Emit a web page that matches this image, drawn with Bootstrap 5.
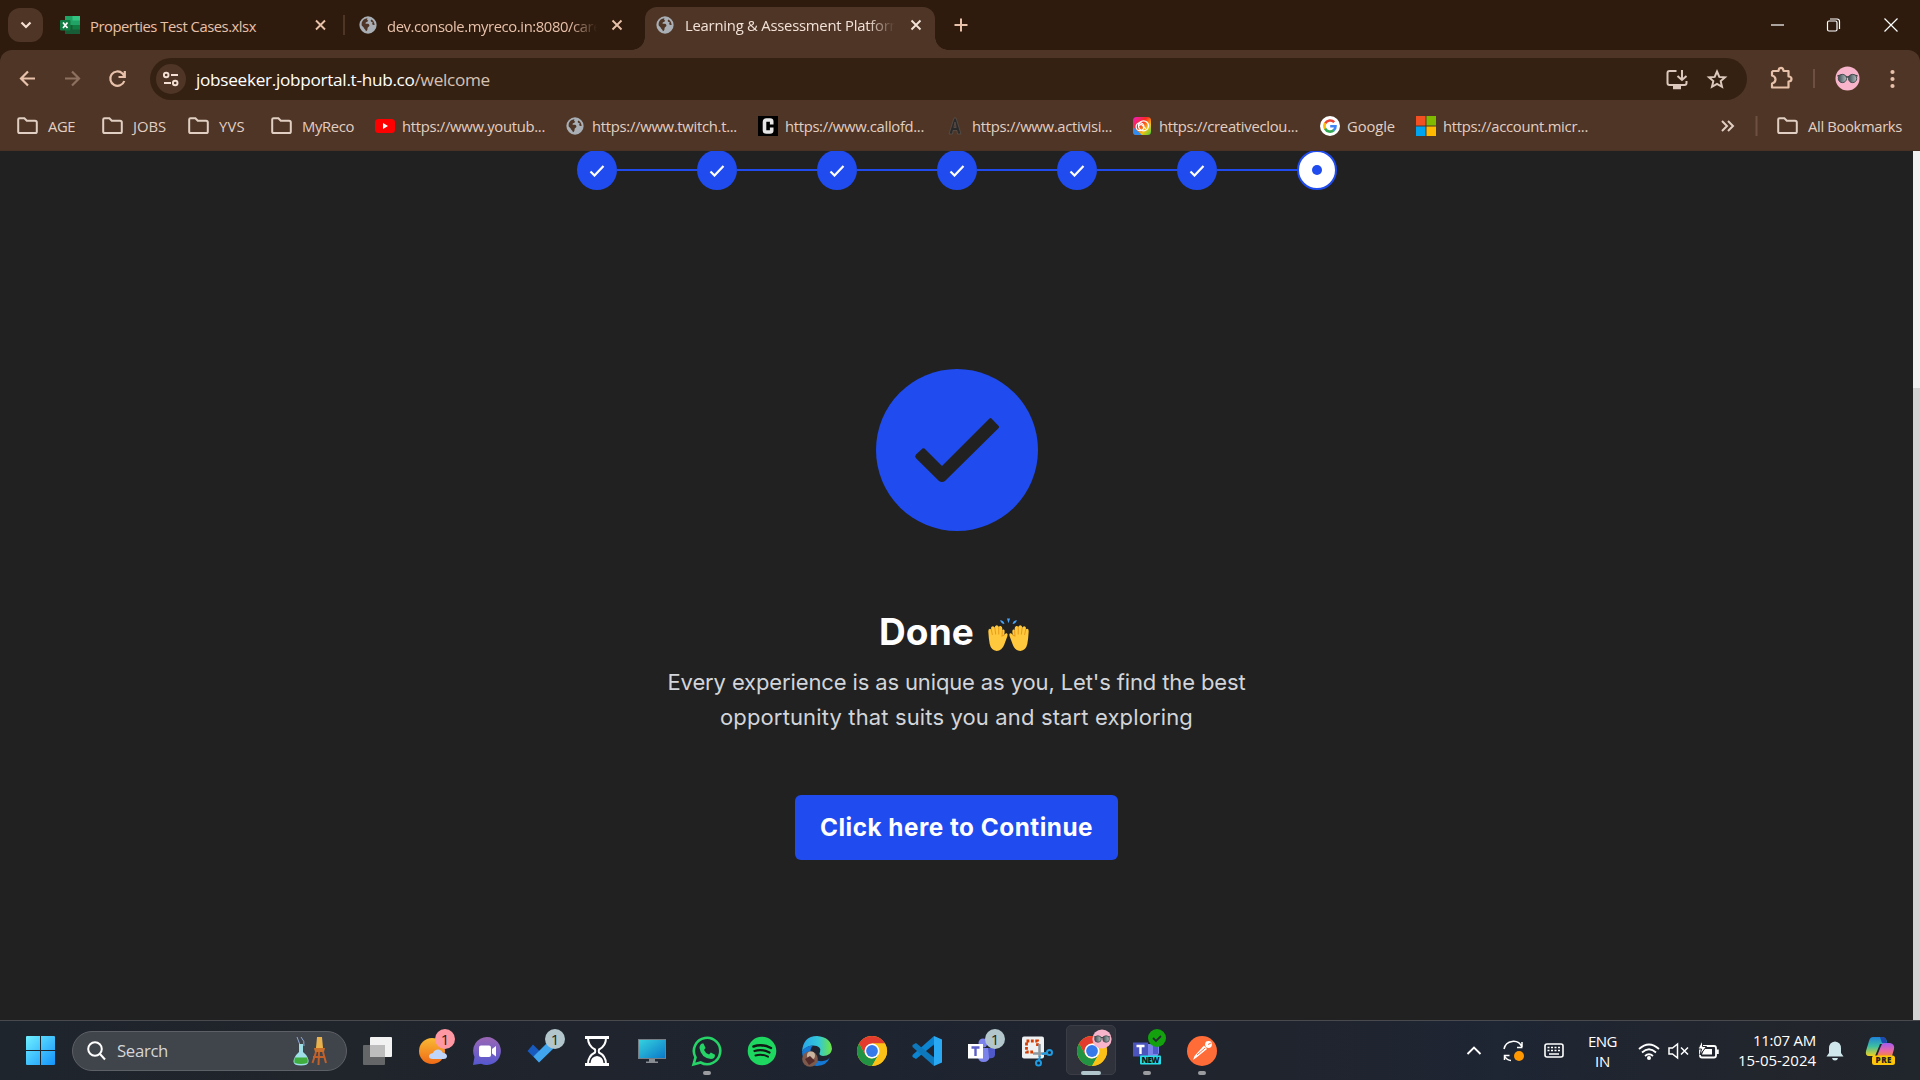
<!DOCTYPE html>
<html lang="en" data-bs-theme="dark">
<head>
<meta charset="utf-8">
<title>Learning &amp; Assessment Platform</title>
<link href="https://cdn.jsdelivr.net/npm/bootstrap@5.3.0/dist/css/bootstrap.min.css" rel="stylesheet">
<style>
:root{--strip:#2e1b0d;--bar:#4e3526;--omni:#352112;--peach:#e8c1aa;--brand:#1f4bef}
html,body{height:100%;overflow:hidden}
body{font-family:"Open Sans","Noto Sans",sans-serif;background:#212121;font-size:14.8px;line-height:20px}
svg{display:block;flex:none}
[data-w]{white-space:nowrap;flex:none}
.strip{height:50px;background:var(--strip);color:var(--peach)}
.strip [data-w],.marks [data-w]{padding-top:1px;display:inline-block}
.drop-btn{width:35px;height:34px;border-radius:12px;background:var(--bar);margin-left:8px}
.tab-a{width:300px;padding-left:17px;gap:10px}
.tab-b{width:300px;padding-left:14px;gap:10px}
.tab-sep{width:2px;height:20px;background:var(--bar)}
.tab-on{width:290px;height:43px;margin-top:7px;padding:0 0 8px 11px;gap:11px;background:var(--bar);border-radius:12px 12px 0 0;color:#f3e2d8;position:relative}
.tab-on::before,.tab-on::after{content:"";position:absolute;bottom:0;width:13px;height:13px}
.tab-on::before{left:-13px;background:radial-gradient(circle at 0 0,transparent 12.5px,var(--bar) 13px)}
.tab-on::after{right:-13px;background:radial-gradient(circle at 100% 0,transparent 12.5px,var(--bar) 13px)}
.tab-text{width:210px;overflow:hidden;white-space:nowrap;-webkit-mask-image:linear-gradient(90deg,#000 87%,transparent)}
.plus{margin-left:19px}
.tool-wrap{background:var(--strip)}
.tools{height:50px;background:var(--bar);border-radius:12px 12px 0 0}
.omni{width:1597px;height:42px;border-radius:21px;background:var(--omni);margin-top:8px;padding:0 19px 0 6px}
.site-chip{width:30px;height:30px;background:var(--bar)}
.url{font-size:17.2px;color:#fff;padding:1px 0 0 2px}
.url span{color:#d5c2b5}
.marks{height:51px;background:var(--bar);color:#e2cfc3;padding:1px 0 0 17px;border-bottom:1px solid #4a3326}
.marks-grid{display:grid;grid-template-columns:85px 86px 83px 104px 190px 193px 187px 187px 188px 96px 305px;align-items:center}
.marks-grid>div{display:flex;align-items:center;gap:7px}
.marks-grid>.dir,.all-dir{gap:10px}
.page{height:869px}
.steps{height:40px;margin-top:-1px}
.dot-step{width:40px;height:40px;border-radius:50%;background:var(--brand)}
.dot-now{background:#fff;border:2px solid var(--brand)}
.dot-now i{width:10px;height:10px;border-radius:50%;background:var(--brand)}
.step-line{width:80px;height:2px;background:var(--brand)}
.copy,.headline,.go{font-family:Inter,"Open Sans",sans-serif}
.hero{margin-top:179px}
.headline{font-size:37px;font-weight:700;line-height:48px;color:#fff;margin:77px 0 0;padding-right:5px;gap:14px}
.copy{font-size:22px;line-height:35px;color:#d2d5da;margin:9px 0 0}
.go{width:323px;height:65px;background:var(--brand);border-radius:6px;color:#fff;font-weight:700;font-size:24.3px;margin-top:60px;padding:0;border:0}
.scroll-rail{width:7px;background:#d4d4d4}
.scroll-rail i{display:block;height:237px;background:#f1f1f1}
.taskbar{height:60px;background:linear-gradient(90deg,#1f252d,#20242b 18%,#1e2430 45%,#20242d 66%,#1e2533 78%,#22252b 94%,#20262c);border-top:1px solid #484a4e;color:#fff}
.start{width:72px;padding-left:26px}
.find{width:275px;height:40px;border-radius:20px;background:#40444b;border:1px solid #5d6066;font-size:16.8px;color:#d4d6d8;padding-left:14px}
.apps{margin-left:2px}
.cell{width:55px;height:59px;position:relative}
.cell svg.ic{width:32px;height:32px}
.num{position:absolute;left:31px;top:8px;width:20px;height:20px;border-radius:50%;background:#b3c6cb;color:#222;font-size:15px;line-height:20px;text-align:center}
.num.pk{background:#ff98a3}
.on-tile::before{content:"";position:absolute;left:2px;top:4px;width:50px;height:50px;border-radius:5px;background:#2f323a;border:1px solid #3a3d45}
.on-tile svg{position:relative}
.run::after{content:"";position:absolute;bottom:5px;left:24px;width:8px;height:4px;border-radius:2px;background:#9a9ca0}
.run.wide::after{left:17px;width:20px;background:#b0c6cc}
.over{position:absolute!important}
.face{left:28px;top:8px}
.fresh{left:12px;top:7px}
.stamp{font-size:15px;line-height:20px}
.lang{margin:0 18px 0 16px}
.clock{margin-left:17px;padding-bottom:2px}
.tray{padding-right:25px}
</style>
<script src="https://cdn.jsdelivr.net/npm/bootstrap@5.3.0/dist/js/bootstrap.bundle.min.js"></script>
</head>
<body class="d-flex flex-column">
<svg width="0" height="0" class="over"><defs>
<symbol id="globe" viewBox="0 0 20 20"><circle cx="10" cy="10" r="9.6" fill="#a9afb5"/><path d="M3 10.500C2.500 6 5 3 9.500 2.600 8.500 4 9 4.800 10.300 5.200 9.700 7 7.400 6.300 7 8.300 8 8.800 11 8 11.500 10 12 12 9.600 11.800 9.500 13.800 9.400 15.800 8.600 16.800 7.600 17 7.700 14.500 5.200 14.400 5 12.400ZM13.500 3.800C12.300 5.600 13.600 6.600 15.300 7 14 9 14.700 10.500 17.400 10 17 6.800 15.800 4.800 13.500 3.800Z" fill="#4e3526"/></symbol>
<symbol id="folder" viewBox="0 0 21 18"><path d="M1.200 14.400V2.600Q1.200 1.200 2.600 1.200H7.400L9.800 3.700H18Q19.800 3.700 19.800 5.400V14.400Q19.800 16 18.200 16H2.800Q1.200 16 1.200 14.400Z" fill="none" stroke="#e2cfc3" stroke-width="2"/></symbol>
<symbol id="cross" viewBox="0 0 12 12"><path d="M1.500 1.500 10.500 10.500M10.500 1.500 1.500 10.500" stroke="currentColor" stroke-width="1.900"/></symbol>
<symbol id="chrome" viewBox="0 0 32 32"><circle cx="16" cy="16" r="15" fill="#fbc116"/><path d="M3 8.500A15 15 0 0 1 29 8.500H16L9.500 20Z" fill="#e33b2e"/><path d="M3 8.500 9.600 20Q12 23.500 16 23.500L22.400 19.800 16 31A15 15 0 0 1 3 8.500Z" fill="#229342"/><path d="M16 8.500H29A15 15 0 0 1 16 31L22.500 19.800Z" fill="#fbc116"/><circle cx="16" cy="16" r="7.500" fill="#fff"/><circle cx="16" cy="16" r="5.900" fill="#3579ea"/></symbol>
<symbol id="shades" viewBox="0 0 26 26"><circle cx="13" cy="13" r="12.500" fill="#f7b4cb"/><path d="M2.500 10.500Q7 8.500 13 11.500 19 8.500 23.500 10.500" stroke="#444" stroke-width="1.500" fill="none"/><circle cx="7.700" cy="13" r="4.300" fill="url(#lens)" stroke="#454b4e"/><circle cx="18.300" cy="13" r="4.300" fill="url(#lens)" stroke="#454b4e"/></symbol>
<linearGradient id="lens"><stop stop-color="#3b4c52"/><stop offset="1" stop-color="#b6bec0"/></linearGradient>
<linearGradient id="sky" x2="1" y2="1"><stop stop-color="#6ff0ff"/><stop offset="1" stop-color="#1493fb"/></linearGradient>
<linearGradient id="sun" x2="0" y2="1"><stop stop-color="#f9b934"/><stop offset="1" stop-color="#f06a16"/></linearGradient>
<linearGradient id="chatg" x2="0" y2="1"><stop stop-color="#9a66b4"/><stop offset="1" stop-color="#5558d0"/></linearGradient>
<linearGradient id="desk" x2="1" y2="1"><stop stop-color="#35d4df"/><stop offset="1" stop-color="#0b76c8"/></linearGradient>
<linearGradient id="edgeg" x2="1"><stop stop-color="#28a6ec"/><stop offset=".55" stop-color="#33c7d8"/><stop offset="1" stop-color="#6fe63f"/></linearGradient>
<linearGradient id="rain" x2="1" y2="1"><stop stop-color="#f01ccc"/><stop offset=".4" stop-color="#fa2a20"/><stop offset=".7" stop-color="#f5c313"/><stop offset="1" stop-color="#3bd33b"/></linearGradient>
<linearGradient id="cop" x2="0" y2="1"><stop stop-color="#1e82d8"/><stop offset=".5" stop-color="#3fbfa0"/><stop offset="1" stop-color="#f2d21f"/></linearGradient>
<linearGradient id="cop2" x2="0" y2="1"><stop stop-color="#a25bf0"/><stop offset=".6" stop-color="#ea68a4"/><stop offset="1" stop-color="#f2863f"/></linearGradient>
</defs></svg>

<header>
<div class="strip d-flex align-items-center">
  <div class="drop-btn d-flex align-items-center justify-content-center"><svg width="12" height="8" viewBox="0 0 12 8"><path d="M1.500 1.500 6 6 10.500 1.500" fill="none" stroke="#f7e0d3" stroke-width="2.200"/></svg></div>
  <div class="tab-a d-flex align-items-center">
    <svg width="20" height="18" viewBox="0 0 20 18"><path d="M5 0H20V18H5Z" fill="#21a366"/><path d="M12.500 0H20V4.500H12.500Z" fill="#33c481"/><path d="M5 9H20V18H5Z" fill="#185c37"/><path d="M12.500 9H20V13.500H12.500Z" fill="#107c41"/><rect y="4" width="10.500" height="10.500" rx="1" fill="#107c41"/><path d="M3 6.500 7.500 12M7.500 6.500 3 12" stroke="#fff" stroke-width="1.700"/></svg>
    <span data-w="166">Properties Test Cases.xlsx</span>
    <svg class="ms-auto me-3" width="13" height="12"><use href="#cross"/></svg>
  </div>
  <div class="tab-sep"></div>
  <div class="tab-b d-flex align-items-center">
    <svg width="18" height="18"><use href="#globe"/></svg>
    <div class="tab-text"><span data-w="222">dev.console.myreco.in:8080/caree</span></div>
    <svg class="ms-1" width="12" height="12"><use href="#cross"/></svg>
  </div>
  <div class="tab-on d-flex align-items-center">
    <svg width="18" height="18"><use href="#globe"/></svg>
    <div class="tab-text"><span data-w="218">Learning &amp; Assessment Platform</span></div>
    <svg class="ms-1" width="12" height="12"><use href="#cross"/></svg>
  </div>
  <svg class="plus" width="14" height="14" viewBox="0 0 14 14"><path d="M7 .5V13.500M.5 7H13.500" stroke="#e8c1aa" stroke-width="2"/></svg>
  <svg class="ms-auto" width="150" height="16" viewBox="0 0 150 16" fill="none" stroke="#fff" stroke-width="1.200"><path d="M1 8H14"/><rect x="57.500" y="4" width="9.500" height="10" rx="1.500"/><path d="M60 2H67Q69.500 2 69.500 4.500V12"/><path d="M114.500 1.500 127.500 14.500M127.500 1.500 114.500 14.500"/></svg>
</div>
<div class="tool-wrap"><div class="tools d-flex align-items-center">
  <svg width="150" height="50" viewBox="0 0 150 50" fill="none" stroke="#e8c1aa" stroke-width="2.200"><path d="M35 28.500H21.500M28 21.500 21 28.500 28 35.500"/><path d="M65 28.500H79M72 21.500 79 28.500 72 35.500" stroke="#8d705f"/><path d="M124.300 31A7.200 7.200 0 1 1 122.500 23.500L124 25.500M124.800 21V27H118.500"/></svg>
  <div class="omni d-flex align-items-center">
    <div class="site-chip rounded-circle d-flex align-items-center justify-content-center"><svg width="18" height="16" viewBox="0 0 18 16" fill="none" stroke="#f3dfd3" stroke-width="1.900"><circle cx="4.200" cy="4" r="2.300"/><path d="M9 4H16M2 12H9"/><circle cx="13.200" cy="12" r="2.300"/></svg></div>
    <div class="url ms-2" data-w="294">jobseeker.jobportal.t-hub.co<span>/welcome</span></div>
    <svg class="ms-auto" width="62" height="22" viewBox="0 0 62 22" fill="none" stroke="#dcc8bc" stroke-width="2"><path d="M10.500 3H3.500Q1.500 3 1.500 5V15Q1.500 17 3.500 17H18.500Q20.500 17 20.500 15V13"/><path d="M7 19.500H15" stroke-width="3.500"/><path d="M16 2V11M11.500 8 16 12 20.500 8"/><path d="M51 3.500 53.300 8.900 59 9.400 54.700 13.100 56 18.800 51 15.800 46 18.800 47.300 13.100 43 9.400 48.700 8.900Z"/></svg>
  </div>
  <svg width="173" height="50" viewBox="0 0 173 50" fill="none"><path d="M26 21H31.500Q31.800 17.800 34 17.800T36.500 21H41.500V26.500Q44.500 26.500 44.500 29T41.500 31.500V37.500H25V33.500Q28.500 32.500 28.500 29.500T25 25.500V22Z" stroke="#e8c1aa" stroke-width="2.200" stroke-linejoin="round"/><path d="M67 19V38" stroke="#6e5040" stroke-width="2"/><use href="#shades" x="88" y="16" width="25" height="25"/><g fill="#e8c1aa"><circle cx="145.500" cy="22" r="2.100"/><circle cx="145.500" cy="29" r="2.100"/><circle cx="145.500" cy="36" r="2.100"/></g></svg>
</div></div>
<div class="marks d-flex align-items-center">
  <div class="marks-grid">
    <div class="dir"><svg width="21" height="18"><use href="#folder"/></svg><span data-w="27">AGE</span></div>
    <div class="dir"><svg width="21" height="18"><use href="#folder"/></svg><span data-w="33">JOBS</span></div>
    <div class="dir"><svg width="21" height="18"><use href="#folder"/></svg><span data-w="26">YVS</span></div>
    <div class="dir"><svg width="21" height="18"><use href="#folder"/></svg><span data-w="52">MyReco</span></div>
    <div><svg width="20" height="20" viewBox="0 0 20 20"><rect y="3" width="20" height="14" rx="3.500" fill="#f00"/><path d="M8 7V13L13 10Z" fill="#fff"/></svg><span data-w="143">https://www.youtub...</span></div>
    <div><svg width="20" height="18"><use href="#globe"/></svg><span data-w="145">https://www.twitch.t...</span></div>
    <div><svg width="20" height="20" viewBox="0 0 20 20"><path d="M0 0H20V20H0Z" fill="#000"/><path d="M13.700 8.500V5.500Q13.700 4 12 4H8.500Q6.500 4 6.500 6V14.500Q6.500 16 8.500 16H12Q13.700 16 13.700 14.500V11.500" fill="none" stroke="#e6e6e6" stroke-width="3.600"/></svg><span data-w="139">https://www.callofd...</span></div>
    <div><svg width="20" height="20" viewBox="0 0 20 20"><path d="M4 18 9 2H11L16 18H12.500L12 14.500H8L7.500 18ZM8.800 11.500H11.200L10 6Z" fill="#2b2a2a" stroke="#655b55" stroke-width=".6"/></svg><span data-w="140">https://www.activisi...</span></div>
    <div><svg width="20" height="20" viewBox="0 0 20 20"><rect x="1" y="1" width="18" height="18" rx="3.500" fill="url(#rain)"/><path d="M1 11V15.500Q1 19 4.500 19H10Z" fill="#2f8cf0"/><g fill="none" stroke="#fff" stroke-width="1.300"><circle cx="8" cy="10.800" r="3.900"/><circle cx="11.500" cy="9.800" r="5"/><path d="M7 9.500Q9.500 7.500 11 10T14 12.500"/></g></svg><span data-w="139">https://creativeclou...</span></div>
    <div><svg width="20" height="20" viewBox="0 0 20 20"><circle cx="10" cy="10" r="10" fill="#fff"/><g fill="none" stroke-width="2.600"><path d="M5.200 7.400A5.600 5.600 0 0 1 14.200 6.200" stroke="#ea4335"/><path d="M5.200 7.200A5.600 5.600 0 0 0 5.200 12.800" stroke="#fbbc05"/><path d="M5.100 12.600A5.600 5.600 0 0 0 13.800 14.200" stroke="#34a853"/><path d="M13.600 14.400Q15.600 12.600 15.500 10.200H10.200" stroke="#4285f4"/></g></svg><span data-w="48">Google</span></div>
    <div><svg width="20" height="20" viewBox="0 0 20 20"><path d="M0 0H9.500V9.500H0Z" fill="#f25022"/><path d="M10.500 0H20V9.500H10.500Z" fill="#7fba00"/><path d="M0 10.500H9.500V20H0Z" fill="#00a4ef"/><path d="M10.500 10.500H20V20H10.500Z" fill="#ffb900"/></svg><span data-w="145">https://account.micr...</span></div>
  </div>
  <svg width="56" height="20" viewBox="0 0 56 20" fill="none" stroke="#e2cfc3" stroke-width="2"><path d="M1 5 6 10 1 15M7 5 12 10 7 15"/><path d="M35.500 0V20" stroke="#6e5040"/></svg>
  <div class="all-dir d-flex align-items-center"><svg width="21" height="18"><use href="#folder"/></svg><span data-w="94">All Bookmarks</span></div>
</div>
</header>

<main class="page d-flex overflow-hidden">
  <section class="flex-grow-1 d-flex flex-column align-items-center">
    <div class="steps d-flex align-items-center" id="steps"></div>
    <svg class="hero" width="162" height="162" viewBox="0 0 162 162"><circle cx="81" cy="81" r="81" fill="#1f4bef"/><path d="M40 85.500 46.500 79.500Q47.500 78.800 48.500 79.500L66 97 113.500 49.600Q114.500 48.600 115.500 49.600L122.700 56.900Q123.500 57.900 122.700 58.900L69 112Q66 114 63 112L40 89.200Q38.300 87.500 40 85.500Z" fill="#212121"/></svg>
    <h1 class="headline d-flex align-items-center justify-content-center"><span data-w="95">Done</span>
      <svg class="mt-1" width="41" height="33" viewBox="0 0 40 32" role="img" aria-label="raised hands"><g id="hand"><path d="M.3 13Q.2 10.300 1.800 10.300 2.800 10.300 3.200 11.500L3 9.500Q3.200 7.800 4.800 7.900 6 8 6.600 9.500 6.600 7 8.500 7 10 7 10.500 8.800 11 7.500 12.500 7.800 14 8.200 14 10.500V12Q14.500 10.800 15.500 11.200 16.500 11.800 16.200 14L15.800 16.500Q17 14.200 18.400 14.800 19.700 15.500 18.800 18L15.800 26Q13.500 32 8.500 32 3 31.500 1.600 25Q.6 19 .3 13Z" fill="#ffc83d"/><path d="M3.300 11.500 4.300 16.500M6.700 9.500 7.500 16M10.500 9V16M14 12 13.700 17.500Q15 17 15.800 16.500" stroke="#e89b1c" stroke-width="1" fill="none"/></g><use href="#hand" transform="translate(40) scale(-1 1)"/><path d="M11.700 2Q15.500 2 16 5.700 13 5.500 11.700 2ZM18.500 .3H21.500L20 5ZM28.300 2Q24.500 2 24 5.700 27 5.500 28.300 2Z" fill="#46a4fb"/></svg></h1>
    <p class="copy text-center"><span data-w="578">Every experience is as unique as you, Let's find the best</span><br><span data-w="473">opportunity that suits you and start exploring</span></p>
    <button class="btn go"><span data-w="273">Click here to Continue</span></button>
  </section>
  <div class="scroll-rail"><i></i></div>
</main>

<footer class="taskbar d-flex align-items-center">
  <div class="start"><svg width="29" height="29" viewBox="0 0 29 29" fill="url(#sky)"><path d="M0 1Q0 0 1 0H14V14H0ZM15 0H28Q29 0 29 1V14H15ZM0 15H14V29H1Q0 29 0 28ZM15 15H29V28Q29 29 28 29H15Z"/></svg></div>
  <div class="find d-flex align-items-center gap-2">
    <svg width="22" height="20" viewBox="0 0 22 20" fill="none" stroke="#fff" stroke-width="2"><circle cx="8" cy="8" r="6.800"/><path d="M13 13 18 18.500"/></svg>
    <span data-w="51">Search</span>
    <svg class="ms-auto me-3" width="38" height="32" viewBox="0 0 38 32"><path d="M5 2 8 10M9 2Q13 6 12 11" stroke="#8fa8d8" fill="none"/><path d="M7 9H11V17Q17 22 16.500 27 16 30.500 9 30.500T1.500 27Q1.500 22 7 17Z" fill="#9fe0e8"/><path d="M3 22.500H15Q16.500 25 15.500 28 9 30 2.500 28 2 25 3 22.500Z" fill="#3fae3f"/><path d="M25 2H30L31 13H24Z" fill="#e9b24c"/><path d="M22 13H33L32 17H23Z" fill="#c96f2a"/><path d="M24 17 20.500 28M27 17 26.500 30M31 17 34 28M21 22H33" fill="none" stroke="#c0602a" stroke-width="2"/></svg>
  </div>
  <div class="apps d-flex">
    <div class="cell d-flex align-items-center justify-content-center"><svg class="ic" viewBox="0 0 32 32"><rect x="9" y="2" width="22" height="20" rx="1" fill="#f2f2f2"/><rect x="2" y="10" width="22" height="20" rx="1" fill="#777" opacity=".8"/><path d="M9 10H24V22H9Z" fill="#bdbdbd"/></svg></div>
    <div class="cell d-flex align-items-center justify-content-center"><svg class="ic" viewBox="0 0 32 32"><circle cx="16" cy="16" r="13" fill="url(#sun)"/><path d="M17 24Q12.500 24 13 20.500 14 18 17 18 18.500 14 23 14.500 26 15 27 18 31 18 31 21.500 30.500 24 27.500 24Z" fill="#bfd6fa"/></svg><span class="num pk">1</span></div>
    <div class="cell d-flex align-items-center justify-content-center"><svg class="ic" viewBox="0 0 32 32"><path d="M16 2A14 14 0 1 1 10 28.700L2 30 3.500 22A14 14 0 0 1 16 2Z" fill="url(#chatg)"/><rect x="8" y="10.500" width="12" height="11.500" rx="2" fill="#fff"/><path d="M21 14 25 11V21.500L21 18.500Z" fill="#fff"/></svg></div>
    <div class="cell d-flex align-items-center justify-content-center"><svg class="ic" viewBox="0 0 32 32"><path d="M7 9.500 1.500 16 13 27.500 18.500 21Z" fill="#185abd"/><path d="M13 27.500 7.500 21.500 24 5 30 11Z" fill="#41a5ee"/></svg><span class="num">1</span></div>
    <div class="cell d-flex align-items-center justify-content-center"><svg class="ic" viewBox="0 0 32 32" fill="none" stroke="#fff" stroke-width="2"><path d="M4 2.500H28M4 29.500H28" stroke-width="2.800"/><path d="M7 3Q7 11 14 14.500 14.500 16 14 17.500 7 21 7 29M25 3Q25 11 18 14.500 17.500 16 18 17.500 25 21 25 29"/><path d="M9.500 28Q10 21.500 16 21 22 21.500 22.500 28Z" fill="#fff" stroke="none"/></svg></div>
    <div class="cell d-flex align-items-center justify-content-center"><svg class="ic" viewBox="0 0 32 32"><rect x="2.500" y="4.500" width="27" height="19" fill="url(#desk)" stroke="#777e85"/><path d="M13 24H19V26.500H22V28H10V26.500H13Z" fill="#878d93"/></svg></div>
    <div class="cell run d-flex align-items-center justify-content-center"><svg class="ic" viewBox="0 0 32 32"><path d="M2.500 29.500 4.500 22.300A13.200 13.200 0 1 1 9.700 27.500Z" fill="none" stroke="#25d366" stroke-width="2.600"/><path d="M11 8.500H12.500L14.500 13 13 15Q14.500 18.500 18 19.500L19.800 17.500 24 19.700Q24 24 20 24 10 23 8.500 13 8.500 9.500 11 8.500Z" fill="#25d366"/></svg></div>
    <div class="cell d-flex align-items-center justify-content-center"><svg class="ic" viewBox="0 0 32 32"><circle cx="16" cy="16" r="14.300" fill="#1ed760"/><g fill="none" stroke="#121a16" stroke-width="2.500" stroke-linecap="round"><path d="M7.500 11.500Q16 8.500 25 13"/><path d="M8.500 16Q16 13.500 23.500 17.500" stroke-width="2.200"/><path d="M9.500 20.500Q16 18.500 22 21.700" stroke-width="1.900"/></g></svg></div>
    <div class="cell d-flex align-items-center justify-content-center"><svg class="ic" viewBox="0 0 32 32"><path d="M1 17Q2 1 16 1 30 2 31 14 30 21 22 21 17 20.500 19 17 21 11 12 10.500 4 11 1 17Z" fill="url(#edgeg)"/><path d="M1 17Q4 10.500 12 10.500 8 14 10.500 20 14 27 22 26 27 25.500 29 22 26 30.500 16 31 2 30 1 17Z" fill="#1478d4"/><circle cx="9" cy="24" r="7.800" fill="#7d5a4c"/><circle cx="10" cy="20.500" r="4" fill="#c9b49f"/><path d="M4 24 9 21 14 26 8 30Z" fill="#542b2b"/></svg></div>
    <div class="cell d-flex align-items-center justify-content-center"><svg class="ic"><use href="#chrome"/></svg></div>
    <div class="cell d-flex align-items-center justify-content-center"><svg class="ic" viewBox="0 0 32 32"><path d="M23 1 31 4.500V27.500L23 31Z" fill="#29a9f4"/><path d="M23 1V9.500L5 24 1.500 22V20Z" fill="#0d84cf"/><path d="M23 31V22.500L5 8 1.500 10V12Z" fill="#0e78bd"/></svg></div>
    <div class="cell d-flex align-items-center justify-content-center"><svg class="ic" viewBox="0 0 32 32"><circle cx="17" cy="8" r="4.500" fill="#7b83eb"/><path d="M12 13H24V21Q23 27 17.500 27 12 27 12 21Z" fill="#7b83eb"/><path d="M22 13H29V20Q28 24 23 23Z" fill="#5059c9"/><rect x="2" y="9" width="15" height="14.500" fill="#fff"/><path d="M5.500 12.500H13.500M9.500 12.500V21" stroke="#5b5fc7" stroke-width="2.400"/></svg><span class="num">1</span></div>
    <div class="cell d-flex align-items-center justify-content-center"><svg class="ic" viewBox="0 0 32 32"><rect x="1" y="1.500" width="22" height="22" rx="2" fill="#eef0f1"/><rect x="5.500" y="6" width="11" height="11" fill="none" stroke="#d83b01" stroke-width="2.800" stroke-dasharray="2.800 1.600"/><path d="M12 12H19V19H12Z" fill="#eef0f1"/><path d="M18.500 9V22M12 18.500H26" stroke="#8d979e" stroke-width="2.500"/><circle cx="17.500" cy="28" r="2.500" fill="none" stroke="#1e9be2" stroke-width="2"/><circle cx="28.500" cy="17.500" r="2.500" fill="none" stroke="#1e9be2" stroke-width="2"/><path d="M18 25.500 19 21M26 18 21 19" stroke="#1e9be2" stroke-width="2"/></svg></div>
    <div class="cell on-tile run wide d-flex align-items-center justify-content-center"><svg class="ic"><use href="#chrome"/></svg><svg class="over face" width="20" height="20"><use href="#shades"/></svg></div>
    <div class="cell run d-flex align-items-center justify-content-center"><svg class="over fresh" width="40" height="40" viewBox="0 0 40 40"><path d="M14 16H28V25Q26 31 20 31H14Z" fill="#7b83eb"/><path d="M22 16H27V26H22Z" fill="#5059c9"/><rect x="2" y="14.500" width="15" height="14" fill="#4b53bc"/><path d="M5.500 18H13.500M9.500 18V26" stroke="#fff" stroke-width="2.400"/><circle cx="26" cy="10" r="9" fill="#13a10e"/><path d="M22 10 25 13 30 8" fill="none" stroke="#222a30" stroke-width="1.800"/><rect x="9" y="27.500" width="21" height="9" rx="1" fill="#26dfe6"/><text x="19.500" y="34.800" font-size="8" font-weight="800" text-anchor="middle" fill="#081a20" textLength="18" font-family="Open Sans">NEW</text></svg></div>
    <div class="cell run d-flex align-items-center justify-content-center"><svg class="ic" viewBox="0 0 32 32"><circle cx="16" cy="16" r="15" fill="#ff6c37"/><path d="M18 10.500 21 14 10.500 22.500 7 25 8.500 21Z" fill="#fff"/><circle cx="22.500" cy="9.500" r="3.400" fill="#fff"/><path d="M11 20 19 13M22 9.500 25 8" stroke="#ff6c37" stroke-width="1"/></svg></div>
  </div>
  <div class="tray ms-auto d-flex align-items-center">
    <svg width="106" height="32" viewBox="0 0 106 32" fill="none" stroke="#fff" stroke-width="1.900"><path d="M1.500 19 8 12.500 14.500 19"/><path d="M38 14A9.500 9.500 0 0 1 56 12V7M56.500 12.500H51M38.500 25V20.500H43.500M38.500 21Q41 25.500 45 25.500" stroke-width="1.500"/><circle cx="53" cy="21" r="5" fill="#ff9800" stroke="none"/><rect x="79" y="9" width="18" height="13" rx="2" stroke-width="1.600"/><path d="M81.500 12.500H95M81.500 15.500H95" stroke-dasharray="2 1.500" stroke-width="1.600"/><path d="M83 19H93" stroke-width="1.500"/></svg>
    <div class="stamp lang text-center"><span data-w="29">ENG</span><br><span data-w="15">IN</span></div>
    <svg width="86" height="24" viewBox="0 0 86 24" fill="none" stroke="#fff" stroke-width="1.800"><path d="M4 10Q14 1 24 10M7 13.500Q14 7 21 13.500M10 17Q14 13.500 18 17"/><circle cx="14" cy="19" r="2" fill="#fff" stroke="none"/><path d="M34 9H37.500L42.500 5V19L37.500 15H34ZM46 8.500 53 15.500M53 8.500 46 15.500" stroke-width="1.500"/><rect x="65" y="7" width="16" height="11.500" rx="2"/><path d="M82.500 10.500V15" stroke-width="2.500"/><path d="M69 10H77V15.500H67Z" fill="#fff" stroke="none"/><path d="M67.500 1 63 10H66.500L65 16 71.500 7.500H67.500Z" fill="#fff" stroke="#20242b" stroke-width="1"/></svg>
    <div class="stamp clock text-end"><span data-w="63">11:07 AM</span><br><span data-w="78">15-05-2024</span></div>
    <svg class="ms-2" width="20" height="20" viewBox="-2 0 20 20"><path d="M9 .5Q15 1 15 7.500V12L17.500 15.500H.5L3 12V7.500Q3 1 9 .5Z" fill="#cfe6ea"/><path d="M6 17H12Q11.500 19.500 9 19.500T6 17Z" fill="#cfe6ea"/></svg>
    <svg class="ms-3" width="35" height="30" viewBox="-5 0 35 30"><path d="M8 1H17Q21 1 22 6L20 8H15L10 20H4Q0 20 1 15L4 5Q5 1 8 1Z" fill="url(#cop)"/><path d="M15 1H18Q21 1 22 7H17Z" fill="#1d49b0"/><path d="M20 7H25Q30 8 29 13L27 20H12L16 10Q17 7 20 7Z" fill="url(#cop2)"/><rect x="7" y="19.500" width="23" height="9.500" rx="2.500" fill="#fdc60b"/><text x="18.500" y="27" font-size="8" font-weight="800" text-anchor="middle" textLength="16" fill="#222" font-family="Open Sans">PRE</text></svg>
  </div>
</footer>
<script>
// Progress steps: six completed, the last one current
const total = 7, current = 6;
document.getElementById('steps').innerHTML = Array.from({length: total}, (_, i) =>
  (i ? '<div class="step-line"></div>' : '') + (i < current
    ? '<div class="dot-step d-flex align-items-center justify-content-center"><svg width="16" height="13" viewBox="0 0 16 13"><path d="M1.500 7.500 5.500 11.500 14.500 2" fill="none" stroke="#fff" stroke-width="2.200"/></svg></div>'
    : '<div class="dot-step dot-now d-flex align-items-center justify-content-center"><i></i></div>')).join('');
// Track each label so that it fills its allotted width
document.querySelectorAll('[data-w]').forEach(el => {
  const range = document.createRange();
  range.selectNodeContents(el);
  const w = range.getBoundingClientRect().width;
  el.style.letterSpacing = ((el.dataset.w - w) / el.textContent.length).toFixed(3) + 'px';
});
</script>
</body>
</html>
